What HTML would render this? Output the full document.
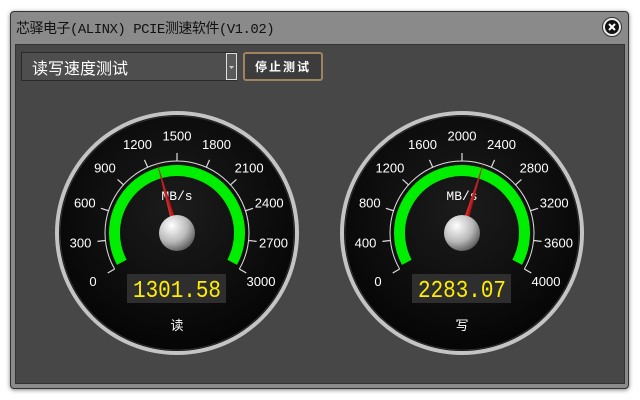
<!DOCTYPE html>
<html><head><meta charset="utf-8"><style>
body{margin:0;width:640px;height:400px;background:#fff;overflow:hidden;font-family:"Liberation Sans","Noto Sans CJK SC",sans-serif;position:relative}
.frame{position:absolute;left:10px;top:11px;width:617px;height:376px;background:#8a8a8a;border:1px solid #333;border-radius:4px;box-shadow:0 1px 4px rgba(0,0,0,.5)}
.title{position:absolute;left:16px;top:18px;font-size:14px;color:#111;font-family:"Liberation Mono","Noto Sans CJK SC",monospace;letter-spacing:-0.5px}
.panel{position:absolute;left:15px;top:44px;width:608px;height:338px;background:#474747;border:1px solid #333}
.combo{position:absolute;left:21px;top:52px;width:216px;height:29px;background:#4e4e4e;border:1px solid #2a2a2a;color:#fff;font-size:16px;line-height:28px;box-sizing:border-box;padding-left:10px;font-family:"Noto Sans CJK SC",sans-serif}
.arrow{position:absolute;left:226px;top:53px;width:11px;height:27px;background:#5a5a5a;border:1px solid #ddd;box-sizing:border-box}
.btn{position:absolute;left:243px;top:52px;width:80px;height:29px;box-sizing:border-box;border:2px solid #a08462;border-radius:3px;background:#3c3c3c;color:#fff;font-size:12px;font-weight:bold;text-align:center;line-height:25px;letter-spacing:2px;font-family:"Noto Sans CJK SC",sans-serif}
.close{position:absolute;left:602px;top:17px;width:20px;height:20px;border-radius:50%;background:#eee;border:1px solid #333;box-sizing:border-box}
</style></head><body>
<div class="frame"></div>
<div class="panel"></div>
<div class="title">芯驿电子(ALINX) PCIE测速软件(V1.02)</div>
<div class="close"><svg width="18" height="18" viewBox="0 0 18 18"><circle cx="9" cy="9" r="7" fill="#111"/><path d="M6 6L12 12M12 6L6 12" stroke="#fff" stroke-width="2"/></svg></div>
<div class="combo">读写速度测试</div>
<div class="arrow"><svg width="9" height="25"><path d="M2 12h5l-2.5 3z" fill="#ccc"/></svg></div>
<div class="btn">停止测试</div>
<svg width="640" height="400" style="position:absolute;left:0;top:0" font-family="Liberation Sans, sans-serif">
<defs>
<radialGradient id="face" cx="50%" cy="40%" r="60%"><stop offset="0" stop-color="#1c1c1c"/><stop offset="1" stop-color="#050505"/></radialGradient>
<radialGradient id="knob" cx="35%" cy="30%" r="75%"><stop offset="0" stop-color="#ffffff"/><stop offset="0.6" stop-color="#b8b8b8"/><stop offset="1" stop-color="#5a5a5a"/></radialGradient>
<linearGradient id="ndl" x1="0" x2="1"><stop offset="0" stop-color="#e04040"/><stop offset="1" stop-color="#900"/></linearGradient>
<g id="dial">
<circle r="122" fill="#c4c4c4"/>
<circle r="118" fill="url(#face)"/>
<circle r="117" fill="none" stroke="#333" stroke-width="1"/>
<path d="M-62.35 36 A72 72 0 1 1 62.35 36" fill="none" stroke="#ddd" stroke-width="1"/>
<path d="M-55.2 29.3 A62.5 62.5 0 1 1 55.2 29.3" fill="none" stroke="#00ee00" stroke-width="11"/>
<g stroke="#ddd" stroke-width="1.2">
<line y1="-72" y2="-80" transform="rotate(-120)"/><line y1="-72" y2="-80" transform="rotate(-96)"/><line y1="-72" y2="-80" transform="rotate(-72)"/><line y1="-72" y2="-80" transform="rotate(-48)"/><line y1="-72" y2="-80" transform="rotate(-24)"/><line y1="-72" y2="-80"/><line y1="-72" y2="-80" transform="rotate(24)"/><line y1="-72" y2="-80" transform="rotate(48)"/><line y1="-72" y2="-80" transform="rotate(72)"/><line y1="-72" y2="-80" transform="rotate(96)"/><line y1="-72" y2="-80" transform="rotate(120)"/>
</g>
<rect x="-50" y="41" width="99" height="29" fill="#2e2e2e"/>
</g>
</defs>
<g transform="translate(177,233)">
<use href="#dial"/>
<text x="0" y="-33" fill="#fff" font-size="13" text-anchor="middle" font-family="Liberation Mono,monospace">MB/s</text>
<polygon points="-3,0 0,-76 3,0" fill="url(#ndl)" transform="rotate(-15.9)"/>
<circle r="18" fill="url(#knob)"/>
<text x="0" y="64" fill="#ffee00" font-size="24" text-anchor="middle" font-family="Liberation Mono,monospace" textLength="88" lengthAdjust="spacingAndGlyphs">1301.58</text>
<text x="0" y="97" fill="#fff" font-size="13" text-anchor="middle" font-family="Noto Sans CJK SC,sans-serif">读</text>
<g fill="#fff" font-size="13" text-anchor="middle" dominant-baseline="central">
<text x="-84" y="48.5">0</text><text x="-96.5" y="10">300</text><text x="-92.2" y="-30">600</text><text x="-72.1" y="-65">900</text><text x="-39.5" y="-88.6">1200</text><text x="0" y="-97">1500</text><text x="39.5" y="-88.6">1800</text><text x="72.1" y="-65">2100</text><text x="92.2" y="-30">2400</text><text x="96.5" y="10">2700</text><text x="84" y="48.5">3000</text>
</g>
</g>
<g transform="translate(462,233)">
<use href="#dial"/>
<text x="0" y="-33" fill="#fff" font-size="13" text-anchor="middle" font-family="Liberation Mono,monospace">MB/s</text>
<polygon points="-3,0 0,-76 3,0" fill="url(#ndl)" transform="rotate(17)"/>
<circle r="18" fill="url(#knob)"/>
<text x="0" y="64" fill="#ffee00" font-size="24" text-anchor="middle" font-family="Liberation Mono,monospace" textLength="88" lengthAdjust="spacingAndGlyphs">2283.07</text>
<text x="0" y="97" fill="#fff" font-size="13" text-anchor="middle" font-family="Noto Sans CJK SC,sans-serif">写</text>
<g fill="#fff" font-size="13" text-anchor="middle" dominant-baseline="central">
<text x="-84" y="48.5">0</text><text x="-96.5" y="10">400</text><text x="-92.2" y="-30">800</text><text x="-72.1" y="-65">1200</text><text x="-39.5" y="-88.6">1600</text><text x="0" y="-97">2000</text><text x="39.5" y="-88.6">2400</text><text x="72.1" y="-65">2800</text><text x="92.2" y="-30">3200</text><text x="96.5" y="10">3600</text><text x="84" y="48.5">4000</text>
</g>
</g>
</svg>
</body></html>
